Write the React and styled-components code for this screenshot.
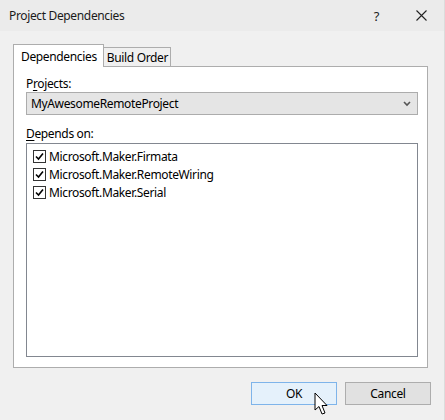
import React from "react";
import styled, { createGlobalStyle } from "styled-components";

const GlobalStyle = createGlobalStyle`
  html, body {
    margin: 0;
    padding: 0;
    background: #f0f0f0;
  }
  body {
    font-family: "Noto Sans", "Liberation Sans", sans-serif;
    font-size: 12px;
    letter-spacing: -0.35px;
    color: #000;
  }
`;

const Window = styled.div`
  position: relative;
  width: 444px;
  height: 420px;
  background: #f0f0f0;
  border-right: 1px solid #dcdcdc;
  display: flex;
  flex-direction: column;
  overflow: hidden;
`;

const TitleBar = styled.div`
  height: 31px;
  background: #ebebeb;
  display: flex;
  align-items: center;
  padding-left: 9px;
  font-size: 12px;
  color: #1a1a1a;
`;

const Title = styled.div`
  flex: 1;
  margin-top: -1px;
`;

const TitleButton = styled.div`
  width: 45px;
  height: 31px;
  display: flex;
  align-items: center;
  justify-content: center;
  font-size: 13px;
  color: #222;
`;

const Body = styled.div`
  padding: 12px 0 0 13px;
  display: flex;
  flex-direction: column;
`;

const TabStrip = styled.div`
  display: flex;
  align-items: flex-end;
  height: 23px;
`;

const Tab = styled.div`
  height: ${(p) => (p.$active ? "23px" : "19px")};
  padding: 0 ${(p) => (p.$active ? "6px 0 7px" : "2px 0 3px")};
  box-sizing: border-box;
  border: 1px solid #adadad;
  border-bottom: none;
  background: ${(p) => (p.$active ? "#ffffff" : "#f0f0f0")};
  display: flex;
  align-items: ${(p) => (p.$active ? "flex-start" : "center")};
  padding-top: ${(p) => (p.$active ? "3px" : "0")};
  margin-bottom: ${(p) => (p.$active ? "-1px" : "0")};
  margin-left: ${(p) => (p.$active ? "0" : "-1px")};
  position: relative;
  z-index: ${(p) => (p.$active ? 1 : 0)};
`;

const Panel = styled.div`
  width: 415px;
  height: 302px;
  box-sizing: border-box;
  border: 1px solid #adadad;
  background: #ffffff;
  padding: 8px 9px 10px 12px;
  display: flex;
  flex-direction: column;
`;

const Label = styled.div`
  height: 17px;
  line-height: 17px;
  margin-bottom: ${(p) => p.$gap || 0}px;
  u {
    text-decoration: underline;
    text-underline-offset: 2px;
  }
`;

const Combo = styled.div`
  height: 23px;
  box-sizing: border-box;
  border: 1px solid #acacac;
  background: #e5e5e5;
  display: flex;
  align-items: center;
  padding: 0 6px 0 4px;
  margin-bottom: 10px;
`;

const ComboText = styled.div`
  flex: 1;
`;

const ListBox = styled.div`
  flex: 1;
  box-sizing: border-box;
  border: 1px solid #828790;
  background: #ffffff;
  padding: 3px 0 0 6px;
  display: flex;
  flex-direction: column;
`;

const Item = styled.div`
  height: 18px;
  display: flex;
  align-items: center;
  gap: 3px;
`;

const CheckBox = styled.div`
  width: 13px;
  height: 13px;
  box-sizing: border-box;
  border: 1px solid #333333;
  background: #ffffff;
  display: flex;
  align-items: center;
  justify-content: center;
`;

const ButtonRow = styled.div`
  display: flex;
  justify-content: flex-end;
  gap: 8px;
  padding: 14px 13px 0 0;
`;

const Button = styled.div`
  width: 86px;
  height: 23px;
  box-sizing: border-box;
  border: 1px solid ${(p) => (p.$hover ? "#7eb4ea" : "#adadad")};
  background: ${(p) => (p.$hover ? "#e5f1fb" : "#e1e1e1")};
  display: flex;
  align-items: center;
  justify-content: center;
`;

const Cursor = styled.svg`
  position: absolute;
  left: 314px;
  top: 392px;
`;

const Check = () => (
  <svg width="9" height="9" viewBox="0 0 9 9">
    <path d="M1 4.5 L3.5 7 L8 1.5" fill="none" stroke="#000" strokeWidth="1.6" />
  </svg>
);

const items = [
  "Microsoft.Maker.Firmata",
  "Microsoft.Maker.RemoteWiring",
  "Microsoft.Maker.Serial",
];

export default function App() {
  return (
    <>
      <GlobalStyle />
      <Window>
        <TitleBar>
          <Title>Project Dependencies</Title>
          <TitleButton>?</TitleButton>
          <TitleButton>
            <svg width="11" height="11" viewBox="0 0 11 11">
              <path d="M0.5 0.5 L10.5 10.5 M10.5 0.5 L0.5 10.5" stroke="#222" strokeWidth="1.1" />
            </svg>
          </TitleButton>
        </TitleBar>
        <Body>
          <TabStrip>
            <Tab $active>Dependencies</Tab>
            <Tab>Build Order</Tab>
          </TabStrip>
          <Panel>
            <Label $gap={0}>
              P<u>r</u>ojects:
            </Label>
            <Combo>
              <ComboText>MyAwesomeRemoteProject</ComboText>
              <svg width="8" height="6" viewBox="0 0 8 6">
                <path d="M1 1 L4 4 L7 1" fill="none" stroke="#555" strokeWidth="1.6" />
              </svg>
            </Combo>
            <Label $gap={1}>
              <u>D</u>epends on:
            </Label>
            <ListBox>
              {items.map((name) => (
                <Item key={name}>
                  <CheckBox>
                    <Check />
                  </CheckBox>
                  {name}
                </Item>
              ))}
            </ListBox>
          </Panel>
          <ButtonRow>
            <Button $hover>OK</Button>
            <Button>Cancel</Button>
          </ButtonRow>
        </Body>
        <Cursor width="18" height="26" viewBox="0 0 18 26">
          <path
            d="M1 1 L1 18 L5 14.5 L8 22 L11 21 L8 13.5 L13 13.5 Z"
            fill="#fff"
            stroke="#000"
            strokeWidth="1"
            strokeLinejoin="round"
          />
        </Cursor>
      </Window>
    </>
  );
}
